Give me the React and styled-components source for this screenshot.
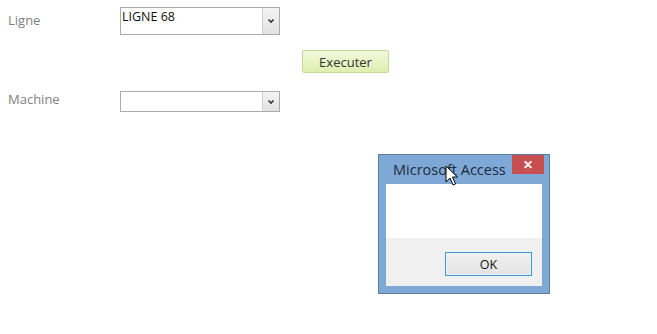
import React from 'react'
import styled, { createGlobalStyle } from 'styled-components'

const GlobalStyle = createGlobalStyle`
  body {
    margin: 0;
    background: #ffffff;
    font-family: "Open Sans", "Noto Sans", sans-serif;
  }
`

const Page = styled.div`
  position: relative;
  width: 657px;
  height: 334px;
  padding: 7px 0 0 0;
  box-sizing: border-box;
  display: flex;
  flex-direction: column;
`

const Row = styled.div`
  display: flex;
  align-items: ${p => p.$align || 'center'};
  height: ${p => p.$h}px;
  margin-top: ${p => p.$mt || 0}px;
`

const Label = styled.div`
  width: 120px;
  padding-left: 8px;
  box-sizing: border-box;
  font-size: 13px;
  color: #7f7f7f;
  margin-top: ${p => p.$mt || 0}px;
  align-self: flex-start;
`

const Combo = styled.div`
  width: 160px;
  height: ${p => p.$h}px;
  box-sizing: border-box;
  border: 1px solid #ababab;
  display: flex;
  background: #fff;
`

const ComboText = styled.div`
  flex: 1;
  font-size: 12.5px;
  color: #111;
  padding: 1px 0 0 1px;
  line-height: 16px;
`

const ComboArrow = styled.div`
  width: 16px;
  border-left: 1px solid #d0d0d0;
  background: linear-gradient(#f4f4f4, #e2e2e2);
  display: flex;
  align-items: center;
  justify-content: center;
`

const ExecButton = styled.div`
  margin-left: 302px;
  width: 87px;
  height: 23px;
  box-sizing: border-box;
  border: 1px solid #c4d99a;
  border-radius: 2px;
  background: linear-gradient(#f2f9dc, #deefb0);
  font-size: 13px;
  color: #333;
  display: flex;
  align-items: center;
  justify-content: center;
`

const Dialog = styled.div`
  margin-left: 378px;
  margin-top: ${p => p.$mt}px;
  width: 172px;
  height: 140px;
  box-sizing: border-box;
  border: 1px solid #5a7da3;
  background: #7ea9d7;
  display: flex;
  flex-direction: column;
  padding: 0 7px 7px 7px;
`

const TitleBar = styled.div`
  height: 29px;
  display: flex;
  justify-content: space-between;
  align-items: flex-start;
  margin-right: -2px;
`

const Title = styled.div`
  font-size: 14.5px;
  color: #1e2a3a;
  padding: 5px 0 0 7px;
`

const CloseBtn = styled.div`
  width: 32px;
  height: 19px;
  background: #c74f4f;
  color: #fff;
  font-size: 12px;
  font-weight: bold;
  display: flex;
  align-items: center;
  justify-content: center;
`

const Content = styled.div`
  height: 54px;
  background: #fff;
`

const Footer = styled.div`
  flex: 1;
  background: #f0f0f0;
  display: flex;
  justify-content: flex-end;
  align-items: flex-start;
  padding: 14px 10px 0 0;
`

const OkButton = styled.div`
  width: 87px;
  height: 24px;
  box-sizing: border-box;
  border: 1px solid #3c9bd5;
  background: linear-gradient(#f0f0f0, #e3e3e3);
  box-shadow: inset 0 0 0 1px #e8f4fb;
  font-size: 12.5px;
  color: #111;
  display: flex;
  align-items: center;
  justify-content: center;
`

const Cursor = styled.svg`
  position: absolute;
  left: 445px;
  top: 165px;
`

function Chevron() {
  return (
    <svg width="8" height="6" viewBox="0 0 8 6">
      <path d="M1.5 1.5 L4 4 L6.5 1.5" fill="none" stroke="#333" strokeWidth="1.6" />
    </svg>
  )
}

function App() {
  return (
    <Page>
      <GlobalStyle />
      <Row $h={28} $align="flex-start">
        <Label $mt={4}>Ligne</Label>
        <Combo $h={28}>
          <ComboText>LIGNE 68</ComboText>
          <ComboArrow><Chevron /></ComboArrow>
        </Combo>
      </Row>
      <Row $h={23} $mt={15}>
        <ExecButton>Executer</ExecButton>
      </Row>
      <Row $h={21} $mt={18} $align="flex-start">
        <Label $mt={-1}>Machine</Label>
        <Combo $h={21}>
          <ComboText />
          <ComboArrow><Chevron /></ComboArrow>
        </Combo>
      </Row>
      <Dialog $mt={42}>
        <TitleBar>
          <Title>Microsoft Access</Title>
          <CloseBtn>✕</CloseBtn>
        </TitleBar>
        <Content />
        <Footer>
          <OkButton>OK</OkButton>
        </Footer>
      </Dialog>
      <Cursor width="14" height="22" viewBox="0 0 14 22">
        <path d="M1 1 L1 17 L5 13 L8 20 L10.5 19 L7.5 12 L12.5 12 Z" fill="#fff" stroke="#000" strokeWidth="1" />
      </Cursor>
    </Page>
  )
}

export default App
